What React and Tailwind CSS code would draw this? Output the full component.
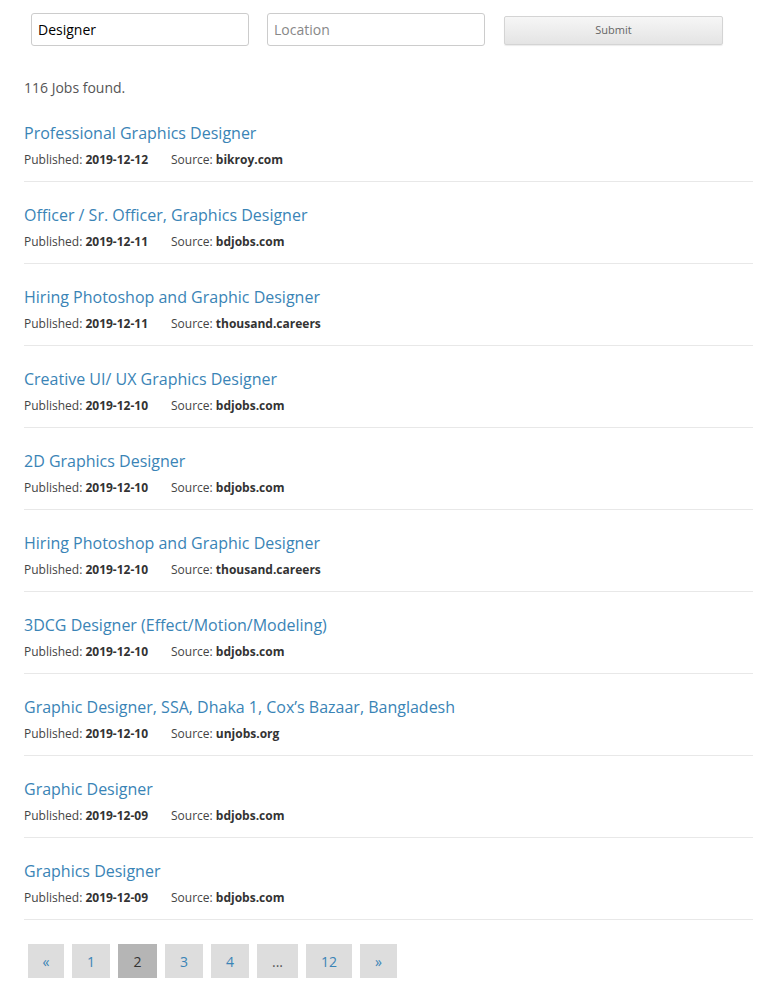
import React from "react";

const jobs = [
  { title: "Professional Graphics Designer", date: "2019-12-12", source: "bikroy.com" },
  { title: "Officer / Sr. Officer, Graphics Designer", date: "2019-12-11", source: "bdjobs.com" },
  { title: "Hiring Photoshop and Graphic Designer", date: "2019-12-11", source: "thousand.careers" },
  { title: "Creative UI/ UX Graphics Designer", date: "2019-12-10", source: "bdjobs.com" },
  { title: "2D Graphics Designer", date: "2019-12-10", source: "bdjobs.com" },
  { title: "Hiring Photoshop and Graphic Designer", date: "2019-12-10", source: "thousand.careers" },
  { title: "3DCG Designer (Effect/Motion/Modeling)", date: "2019-12-10", source: "bdjobs.com" },
  { title: "Graphic Designer, SSA, Dhaka 1, Cox’s Bazaar, Bangladesh", date: "2019-12-10", source: "unjobs.org" },
  { title: "Graphic Designer", date: "2019-12-09", source: "bdjobs.com" },
  { title: "Graphics Designer", date: "2019-12-09", source: "bdjobs.com" },
];

const pages = [
  { label: "«", w: "w-[36px]" },
  { label: "1", w: "w-[38px]" },
  { label: "2", w: "w-[39px]", active: true },
  { label: "3", w: "w-[38px]" },
  { label: "4", w: "w-[38px]" },
  { label: "...", w: "w-[41px]", plain: true },
  { label: "12", w: "w-[46px]" },
  { label: "»", w: "w-[37px]" },
];

export default function App() {
  return (
    <div className="min-h-[994px] bg-white text-[#333] font-['Open_Sans',sans-serif]">
      <SearchForm />
      <div className="pl-[24px] pr-[21px]">
        <p className="mt-[32px] text-[14px] leading-[20px] text-[#555]">116 Jobs found.</p>
        <div className="mt-[2px]">
          {jobs.map((job, i) => (
            <JobRow key={i} job={job} />
          ))}
        </div>
        <Pagination />
      </div>
    </div>
  );
}

function SearchForm() {
  return (
    <div className="flex items-center gap-[18px] pl-[31px] pt-[13px]">
      <input
        className="w-[218px] h-[33px] border border-[#ccc] rounded-[3px] px-[6px] text-[14px] text-black outline-none"
        type="text"
        defaultValue="Designer"
      />
      <input
        className="w-[218px] h-[33px] border border-[#ccc] rounded-[3px] px-[6px] text-[14px] text-black placeholder:text-[#888] outline-none"
        type="text"
        placeholder="Location"
      />
      <button className="ml-[1px] w-[219px] h-[29px] mt-[1px] border border-[#d4d4d4] rounded-[2px] bg-gradient-to-b from-[#f6f6f6] to-[#e4e4e4] text-[11px] text-[#666] shadow-[0_1px_1px_rgba(0,0,0,0.08)]">
        Submit
      </button>
    </div>
  );
}

function JobRow({ job }) {
  return (
    <div className="pt-[21px] pb-[12px] border-b border-[#e8e8e8]">
      <a className="block text-[16px] leading-[24px] text-[#3a84b6]" href="#">
        {job.title}
      </a>
      <div className="mt-[6px] flex text-[12px] leading-[18px] text-[#444]">
        <span className="w-[147px]">
          Published: <b className="font-bold text-[#333]">{job.date}</b>
        </span>
        <span>
          Source: <b className="font-bold text-[#333]">{job.source}</b>
        </span>
      </div>
    </div>
  );
}

function Pagination() {
  return (
    <div className="flex gap-[8px] pl-[4px] mt-[24px]">
      {pages.map((p, i) => (
        <span
          key={i}
          className={
            p.w +
            " h-[34px] flex items-center justify-center text-[14px] " +
            (p.active
              ? "bg-[#b5b5b5] text-[#333]"
              : p.plain
              ? "bg-[#ddd] text-[#555]"
              : "bg-[#ddd] text-[#3a84b6]")
          }
        >
          {p.label}
        </span>
      ))}
    </div>
  );
}
